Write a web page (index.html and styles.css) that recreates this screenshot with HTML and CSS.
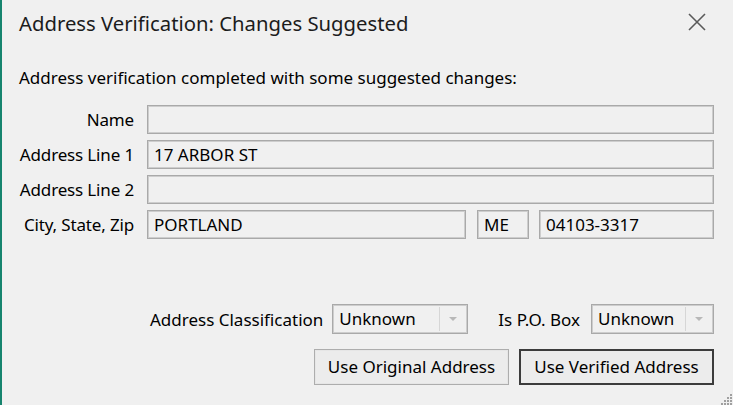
FILE: index.html
```html
<!DOCTYPE html>
<html lang="en">
<head>
<meta charset="utf-8">
<title>Address Verification</title>
<link rel="stylesheet" href="styles.css">
</head>
<body>
<div class="dialog">
  <div class="titlebar">
    <div class="title">Address Verification: Changes Suggested</div>
    <div class="close">
      <svg width="18" height="18" viewBox="0 0 18 18"><path d="M1 1 L17 17 M17 1 L1 17" stroke="#5a5a5a" stroke-width="1.6" fill="none"/></svg>
    </div>
  </div>
  <div class="message">Address verification completed with some suggested changes:</div>
  <div class="form">
    <div class="label">Name</div>
    <div class="field"></div>
    <div class="label">Address Line 1</div>
    <div class="field">17 ARBOR ST</div>
    <div class="label">Address Line 2</div>
    <div class="field"></div>
    <div class="label">City, State, Zip</div>
    <div class="cityrow">
      <div class="field city">PORTLAND</div>
      <div class="field state">ME</div>
      <div class="field zip">04103-3317</div>
    </div>
  </div>
  <div class="options">
    <span class="optlabel">Address Classification</span>
    <div class="combo combo-class"><span class="val">Unknown</span><span class="drop"><span class="arrow"></span></span></div>
    <span class="optlabel pobox">Is P.O. Box</span>
    <div class="combo combo-po"><span class="val">Unknown</span><span class="drop"><span class="arrow"></span></span></div>
  </div>
  <div class="buttons">
    <div class="btn">Use Original Address</div>
    <div class="btn default">Use Verified Address</div>
  </div>
  <div class="grip">
    <svg width="14" height="12" viewBox="0 0 14 12">
      <rect x="11" y="1" width="2" height="2" fill="#a0a0a0"/>
      <rect x="8" y="4" width="2" height="2" fill="#a0a0a0"/>
      <rect x="11" y="4" width="2" height="2" fill="#a0a0a0"/>
      <rect x="5" y="7" width="2" height="2" fill="#a0a0a0"/>
      <rect x="8" y="7" width="2" height="2" fill="#a0a0a0"/>
      <rect x="11" y="7" width="2" height="2" fill="#a0a0a0"/>
      <rect x="2" y="10" width="2" height="2" fill="#a0a0a0"/>
      <rect x="5" y="10" width="2" height="2" fill="#a0a0a0"/>
      <rect x="8" y="10" width="2" height="2" fill="#a0a0a0"/>
      <rect x="11" y="10" width="2" height="2" fill="#a0a0a0"/>
    </svg>
  </div>
</div>
</body>
</html>
```
FILE: styles.css
```css
html, body {
  margin: 0;
  padding: 0;
  background: #f0f0f0;
}
body {
  font-family: "Noto Sans", "Open Sans", sans-serif;
  color: #000;
  width: 733px;
  height: 405px;
  overflow: hidden;
}
.dialog {
  position: relative;
  box-sizing: border-box;
  height: 405px;
  border-left: 2px solid #16846e;
  padding: 0 19px 0 17px;
}
.titlebar {
  display: flex;
  justify-content: space-between;
  align-items: center;
  height: 46px;
}
.title {
  font-size: 20.3px;
  color: #1c1c1c;
}
.close {
  display: flex;
  margin-right: 8px;
  margin-top: -2px;
}
.message {
  font-size: 17px;
  height: 24px;
  line-height: 24px;
  margin-top: 20px;
}
.form {
  display: grid;
  grid-template-columns: 115px 567px;
  column-gap: 13px;
  row-gap: 6px;
  margin-top: 15px;
}
.label {
  font-size: 17px;
  text-align: right;
  line-height: 29px;
  letter-spacing: -0.15px;
  white-space: nowrap;
}
.field {
  box-sizing: border-box;
  height: 29px;
  border: 1px solid #a9a9a9;
  box-shadow: inset 0 0 0 1px #cdcdcd;
  background: #f0f0f0;
  padding: 0 6px;
  font-size: 17px;
  line-height: 27px;
}
.cityrow {
  display: flex;
  gap: 10px;
}
.city { width: 319px; }
.state { width: 52px; margin-left: 1px; }
.zip { width: 175px; }
.options {
  display: flex;
  justify-content: flex-end;
  align-items: center;
  margin-top: 65px;
  height: 30px;
  font-size: 17px;
}
.optlabel { margin-right: 9px; white-space: nowrap; }
.pobox { margin-left: 30px; margin-right: 11px; }
.combo {
  box-sizing: border-box;
  display: flex;
  height: 30px;
  border: 1px solid #a9a9a9;
  box-shadow: inset 0 0 0 1px #cdcdcd;
  align-items: stretch;
}
.combo .val {
  flex: 1;
  padding-left: 6px;
  line-height: 28px;
}
.combo .drop {
  width: 25px;
  border-left: 1px solid #d6d6d6;
  margin: 2px 2px 2px 0;
  display: flex;
  align-items: center;
  justify-content: center;
}
.arrow {
  width: 0;
  height: 0;
  border-left: 4px solid transparent;
  border-right: 4px solid transparent;
  border-top: 4px solid #b8b8b8;
}
.combo-class { width: 136px; }
.combo-po { width: 123px; }
.buttons {
  display: flex;
  justify-content: flex-end;
  gap: 10px;
  margin-top: 15px;
}
.btn {
  box-sizing: border-box;
  width: 195px;
  height: 36px;
  border: 1px solid #adadad;
  box-shadow: inset 0 0 0 1px #e6e6e6;
  background: #ececec;
  font-size: 17px;
  text-align: center;
  line-height: 34px;
}
.btn.default {
  border: 2px solid #3c3c3c;
  box-shadow: none;
  line-height: 32px;
}
.grip {
  position: absolute;
  right: 0;
  bottom: 0;
  line-height: 0;
}
```
